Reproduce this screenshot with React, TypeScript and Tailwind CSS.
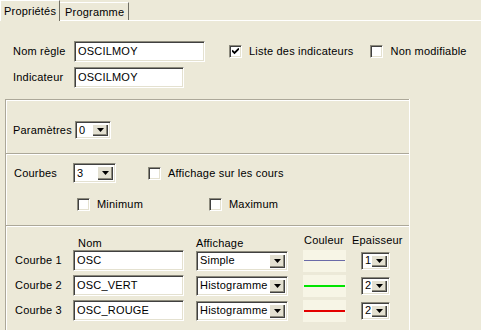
import React from "react";

const sunken =
  "border border-t-[#8c8a7c] border-l-[#8c8a7c] border-r-white border-b-white shadow-[inset_1px_1px_0_#404040,inset_-1px_-1px_0_#e4e1d0]";

function Field({ w, value }: { w: string; value: string }) {
  return (
    <div className={`${w} h-[21px] bg-white ${sunken} flex items-center pl-[3px]`}>
      {value}
    </div>
  );
}

function Arrow() {
  return (
    <svg width="7" height="4" viewBox="0 0 7 4">
      <path d="M0 0h7L3.5 4z" fill="#000" />
    </svg>
  );
}

function Select({ w, h, value }: { w: string; h: string; value: string }) {
  return (
    <div className={`${w} ${h} bg-white ${sunken} flex items-stretch p-[2px]`}>
      <div className="flex-1 flex items-center pl-[1px] overflow-hidden whitespace-nowrap">{value}</div>
      <div className="w-[16px] bg-[#e3e0d1] flex items-center justify-center shadow-[inset_1px_1px_0_#fff,inset_-1px_-1px_0_#404040,inset_-2px_-2px_0_#8c8a7c]">
        <Arrow />
      </div>
    </div>
  );
}

function Check({ checked, label }: { checked?: boolean; label: string }) {
  return (
    <div className="flex items-center gap-[7px]">
      <div className={`w-[13px] h-[13px] bg-white ${sunken} flex items-center justify-center`}>
        {checked && (
          <svg width="7" height="7" viewBox="0 0 7 7">
            <path d="M0 2.5 L2.5 5 L7 0.5" stroke="#000" strokeWidth="1.8" fill="none" />
          </svg>
        )}
      </div>
      <span>{label}</span>
    </div>
  );
}

function Swatch({ color, thick }: { color: string; thick: string }) {
  return (
    <div className="w-[43px] h-[22px] bg-[#f7f5e6] flex items-center px-[1px]">
      <div className={`w-full ${thick} ${color}`} />
    </div>
  );
}

const courbes = [
  { label: "Courbe 1", nom: "OSC", aff: "Simple", color: "bg-[#6b6ba8]", thick: "h-[1px]", ep: "1" },
  { label: "Courbe 2", nom: "OSC_VERT", aff: "Histogramme", color: "bg-[#00e400]", thick: "h-[2px]", ep: "2" },
  { label: "Courbe 3", nom: "OSC_ROUGE", aff: "Histogramme", color: "bg-[#e40000]", thick: "h-[2px]", ep: "2" },
];

export default function App() {
  return (
    <div className="w-[481px] h-[330px] overflow-hidden bg-[#ece9d8] text-black text-[11px] tracking-[0.2px] font-['Liberation_Sans',Arial,sans-serif] leading-none">
      {/* Tabs */}
      <div className="h-[21px] flex items-start border-b border-white">
        <div className="h-[21px] w-[60px] pl-[3px] pt-[5px] border-t border-l border-white border-r border-r-[#716f64] bg-[#ece9d8]">
          Propriétés
        </div>
        <div className="mt-[2px] h-[18px] w-[69px] pl-[5px] pt-[4px] border-t border-white border-r border-r-[#716f64]">
          Programme
        </div>
      </div>

      {/* Nom / Indicateur */}
      <div className="pt-[20px] pl-[13px]">
        <div className="flex items-center h-[21px]">
          <span className="w-[61px]">Nom règle</span>
          <Field w="w-[131px]" value="OSCILMOY" />
          <div className="ml-[24px]">
            <Check checked label="Liste des indicateurs" />
          </div>
          <div className="ml-[17px]">
            <Check label="Non modifiable" />
          </div>
        </div>
        <div className="flex items-center h-[21px] mt-[5px]">
          <span className="w-[61px]">Indicateur</span>
          <Field w="w-[110px]" value="OSCILMOY" />
        </div>
      </div>

      {/* Panels */}
      <div className="mt-[11px] ml-[5px] w-[405px] h-[240px] border-l border-l-[#aca899] border-r border-r-white shadow-[inset_1px_0_0_#fff]">
        {/* Paramètres */}
        <div className="h-[54px] border-t border-t-[#aca899] shadow-[inset_0_1px_0_#fff] pt-[21px] pl-[7px] flex items-start">
          <div className="flex items-center">
            <span className="w-[62px]">Paramètres</span>
            <Select w="w-[36px]" h="h-[18px]" value="0" />
          </div>
        </div>

        {/* Courbes */}
        <div className="h-[72px] border-t border-t-[#aca899] shadow-[inset_0_1px_0_#fff] pt-[9px] pl-[8px]">
          <div className="flex items-center h-[20px]">
            <span className="w-[59px]">Courbes</span>
            <Select w="w-[43px]" h="h-[20px]" value="3" />
            <div className="ml-[32px]">
              <Check label="Affichage sur les cours" />
            </div>
          </div>
          <div className="flex items-center h-[20px] mt-[11px] pl-[63px]">
            <div className="w-[132px]">
              <Check label="Minimum" />
            </div>
            <Check label="Maximum" />
          </div>
        </div>

        {/* Courbes table */}
        <div className="border-t border-t-[#aca899] shadow-[inset_0_1px_0_#fff] pt-[7px] pl-[8px]">
          <div className="flex items-end h-[16px] mb-[1px]">
            <span className="ml-[64px] w-[118px]">Nom</span>
            <span className="w-[108px]">Affichage</span>
            <span className="w-[48px] mb-[3px]">Couleur</span>
            <span className="mb-[3px]">Epaisseur</span>
          </div>
          <div className="flex flex-col gap-[4px]">
            {courbes.map((c) => (
              <div key={c.label} className="flex items-center h-[21px]">
                <span className="w-[59px] pl-[1px]">{c.label}</span>
                <Field w="w-[111px]" value={c.nom} />
                <div className="ml-[12px]">
                  <Select w="w-[92px]" h="h-[20px]" value={c.aff} />
                </div>
                <div className="ml-[15px]">
                  <Swatch color={c.color} thick={c.thick} />
                </div>
                <div className="ml-[15px]">
                  <Select w="w-[29px]" h="h-[18px]" value={c.ep} />
                </div>
              </div>
            ))}
          </div>
        </div>
      </div>
    </div>
  );
}
